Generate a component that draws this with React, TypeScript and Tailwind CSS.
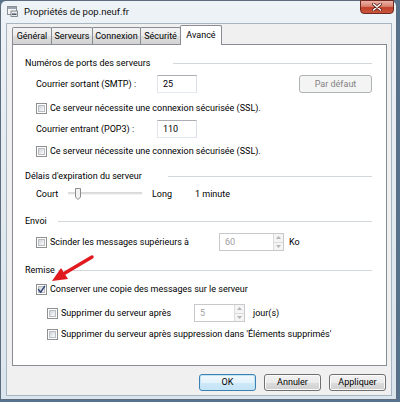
import React from "react";

const Checkbox = ({ checked = false }: { checked?: boolean }) => (
  <span className="relative inline-block w-[11px] h-[11px] shrink-0 border border-[#8e8f8f] bg-white p-px">
    <span className="block w-full h-full border border-[#b9bcc1] bg-[linear-gradient(135deg,#cfd3d8_0%,#eef0f2_70%,#f8f8f8_100%)]" />
    {checked && (
      <svg className="absolute -left-px -top-px" width="11" height="11" viewBox="0 0 11 11">
        <path d="M2.6 5.6 L4.6 8.2 L8.6 2.4" stroke="#34477a" strokeWidth="1.5" fill="none" strokeLinecap="round" strokeLinejoin="round" />
      </svg>
    )}
  </span>
);

const Header = ({ label, w, mt }: { label: string; w: string; mt: string }) => (
  <div className={`flex items-center h-[18px] ${mt}`}>
    <span className={`${w} shrink-0 whitespace-nowrap`}>{label}</span>
    <span className="flex-1 h-px bg-[#d2d7dc] mr-[14px]" />
  </div>
);

const Spin = ({ value, w }: { value: string; w: string }) => (
  <div className={`flex h-[18px] ${w} border border-[#c7c9cc] bg-white`}>
    <span className="flex-1 pl-[5px] flex items-center text-[#a0a0a0]">{value}</span>
    <div className="w-[10px] flex flex-col border-l border-[#dcdcdc] bg-[#f4f4f4]">
      <div className="flex-1 flex items-center justify-center border-b border-[#dcdcdc]">
        <svg width="5" height="3" viewBox="0 0 5 3"><path d="M0 3 L2.5 0 L5 3 Z" fill="#b5b5b5" /></svg>
      </div>
      <div className="flex-1 flex items-center justify-center">
        <svg width="5" height="3" viewBox="0 0 5 3"><path d="M0 0 L2.5 3 L5 0 Z" fill="#b5b5b5" /></svg>
      </div>
    </div>
  </div>
);

const TextBox = ({ value }: { value: string }) => (
  <div className="h-[18px] w-[40px] border border-[#abadb3] border-l-[#e2e3ea] border-r-[#dbdfe6] border-b-[#e3e9ef] bg-white flex items-center pl-[5px]">
    {value}
  </div>
);

const Tab = ({ label, w, first = false }: { label: string; w: string; first?: boolean }) => (
  <div
    className={`${w} h-[17px] mt-[3px] ${first ? "" : "-ml-px"} border border-b-0 border-[#898c95] bg-[linear-gradient(180deg,#f3f3f3_0%,#ebebeb_50%,#dedede_50%,#d2d2d2_100%)] flex items-center justify-center rounded-t-[2px]`}
  >
    {label}
  </div>
);

const Button = ({ label, def = false }: { label: string; def?: boolean }) => (
  <div
    className={`w-[57px] h-[17px] rounded-[3px] border flex items-center justify-center ${
      def
        ? "border-[#3c7fb1] bg-[linear-gradient(180deg,#f2f9fd_0%,#e3f2fb_50%,#cfe9f8_50%,#c3e3f6_100%)] shadow-[inset_0_0_0_1px_#c4e5f6]"
        : "border-[#707070] bg-[linear-gradient(180deg,#f2f2f2_0%,#ebebeb_50%,#dddddd_50%,#cfcfcf_100%)] shadow-[inset_0_0_0_1px_#fbfbfb]"
    }`}
  >
    {label}
  </div>
);

export default function App() {
  return (
    <div className="relative w-[400px] h-[402px] bg-[#56738e] overflow-hidden font-['Roboto',sans-serif] text-[9px] text-black leading-none">
      <div className="w-[397px] h-[400px] rounded-t-[6px] border border-[#5d6d7d] bg-[linear-gradient(180deg,#eef3f7_0%,#e4ebf1_40%,#dbe5ed_100%)] flex flex-col">
        {/* Title bar */}
        <div className="h-[22px] flex items-start relative">
          <div className="mt-[5px] ml-[6px] w-[11px] h-[11px]">
            <svg width="11" height="11" viewBox="0 0 11 11">
              <rect x="0.5" y="0.5" width="9" height="8" fill="#f4f4f4" stroke="#8a8f96" />
              <rect x="1" y="1" width="8" height="2" fill="#9aa4ae" />
              <rect x="4" y="5" width="6.5" height="5.5" fill="#e8eaec" stroke="#6c747c" strokeWidth="0.8" />
              <rect x="5" y="7.5" width="4.5" height="1.5" fill="#4d5b69" />
            </svg>
          </div>
          <span className="mt-[6px] ml-[6px] text-[9.5px] text-[#101010] whitespace-nowrap">Propriétés de pop.neuf.fr</span>
          <div className="ml-auto mr-[2px] w-[34px] h-[14px] -mt-px rounded-b-[4px] border border-[#6e2a20] bg-[linear-gradient(180deg,#ebb3a6_0%,#d9816f_45%,#c2402a_55%,#c9563d_100%)] flex items-center justify-center">
            <svg width="10" height="8" viewBox="0 0 10 8">
              <path d="M1.5 1 L8.5 7 M8.5 1 L1.5 7" stroke="#5a1d15" strokeWidth="3" strokeLinecap="round" />
              <path d="M1.5 1 L8.5 7 M8.5 1 L1.5 7" stroke="#ffffff" strokeWidth="1.6" strokeLinecap="round" />
            </svg>
          </div>
        </div>

        {/* Client area */}
        <div className="ml-[5px] mr-[4px] h-[373px] border border-[#a7b4c1] bg-[#f0f0f0] flex flex-col pl-[5px] pr-[4px]">
          {/* Tabs */}
          <div className="flex h-[20px] items-start relative z-10">
            <Tab label="Général" w="w-[40px]" first />
            <Tab label="Serveurs" w="w-[42px]" />
            <Tab label="Connexion" w="w-[49px]" />
            <Tab label="Sécurité" w="w-[41px]" />
            <div className="w-[42px] h-[20px] mt-px -ml-px border border-b-0 border-[#898c95] bg-white flex items-start justify-center pt-[5px] rounded-t-[2px]">
              Avancé
            </div>
          </div>

          {/* Panel */}
          <div className="h-[322px] border border-[#898c95] bg-white pl-[12px] pt-[9px] flex flex-col">
            <Header label="Numéros de ports des serveurs" w="w-[148px]" mt="" />
            <div className="flex items-center h-[18px] mt-[3px] ml-[11px]">
              <span className="w-[121px] shrink-0">Courrier sortant (SMTP) :</span>
              <TextBox value="25" />
              <div className="ml-auto mr-[14px] w-[73px] h-[18px] rounded-[3px] border border-[#adb2b5] bg-[#f4f4f4] flex items-center justify-center text-[#838383]">
                Par défaut
              </div>
            </div>
            <div className="flex items-center h-[18px] mt-[6px] ml-[11px] gap-[3px]">
              <Checkbox />
              <span>Ce serveur nécessite une connexion sécurisée (SSL).</span>
            </div>
            <div className="flex items-center h-[18px] mt-[3px] ml-[11px]">
              <span className="w-[121px] shrink-0">Courrier entrant (POP3) :</span>
              <TextBox value="110" />
            </div>
            <div className="flex items-center h-[18px] mt-[4px] ml-[11px] gap-[3px]">
              <Checkbox />
              <span>Ce serveur nécessite une connexion sécurisée (SSL).</span>
            </div>

            <Header label="Délais d'expiration du serveur" w="w-[143px]" mt="mt-[7px]" />
            <div className="flex items-center h-[18px] ml-[11px]">
              <span className="w-[31px] shrink-0">Court</span>
              <svg width="78" height="14" viewBox="0 0 78 14" className="shrink-0">
                <rect x="1" y="5.5" width="74" height="1" fill="#b3b3b3" />
                <rect x="1" y="6.5" width="74" height="1" fill="#e8e8e8" />
                <path d="M8.5 1.5 H13.5 V10 L11 12.5 L8.5 10 Z" fill="#f2f2f2" stroke="#8c8c8c" />
              </svg>
              <span className="ml-[7px] w-[43px] shrink-0">Long</span>
              <span>1 minute</span>
            </div>

            <Header label="Envoi" w="w-[33px]" mt="mt-[9px]" />
            <div className="flex items-center h-[18px] mt-[3px] ml-[11px]">
              <Checkbox />
              <span className="ml-[3px] w-[169px] shrink-0">Scinder les messages supérieurs à</span>
              <Spin value="60" w="w-[65px]" />
              <span className="ml-[5px]">Ko</span>
            </div>

            <Header label="Remise" w="w-[33px]" mt="mt-[10px]" />
            <div className="flex items-center h-[18px] mt-px ml-[11px] gap-[3px]">
              <Checkbox checked />
              <span>Conserver une copie des messages sur le serveur</span>
            </div>
            <div className="flex items-center h-[18px] mt-[6px] ml-[22px]">
              <Checkbox />
              <span className="ml-[3px] w-[133px] shrink-0">Supprimer du serveur après</span>
              <Spin value="5" w="w-[51px]" />
              <span className="ml-[8px]">jour(s)</span>
            </div>
            <div className="flex items-center h-[18px] mt-[3px] ml-[22px] gap-[3px]">
              <Checkbox />
              <span>Supprimer du serveur après suppression dans 'Éléments supprimés'</span>
            </div>
          </div>

          {/* Buttons */}
          <div className="flex justify-end gap-[8px] mt-[8px] pr-px">
            <Button label="OK" def />
            <Button label="Annuler" />
            <Button label="Appliquer" />
          </div>
        </div>
      </div>

      {/* Red arrow annotation */}
      <svg className="absolute left-0 top-0 pointer-events-none" width="400" height="402" viewBox="0 0 400 402">
        <path d="M92 257 L65 273" stroke="#e01a1f" strokeWidth="3.5" strokeLinecap="round" />
        <path d="M52 281 L68 279 L61 268 Z" fill="#e01a1f" />
      </svg>
    </div>
  );
}
